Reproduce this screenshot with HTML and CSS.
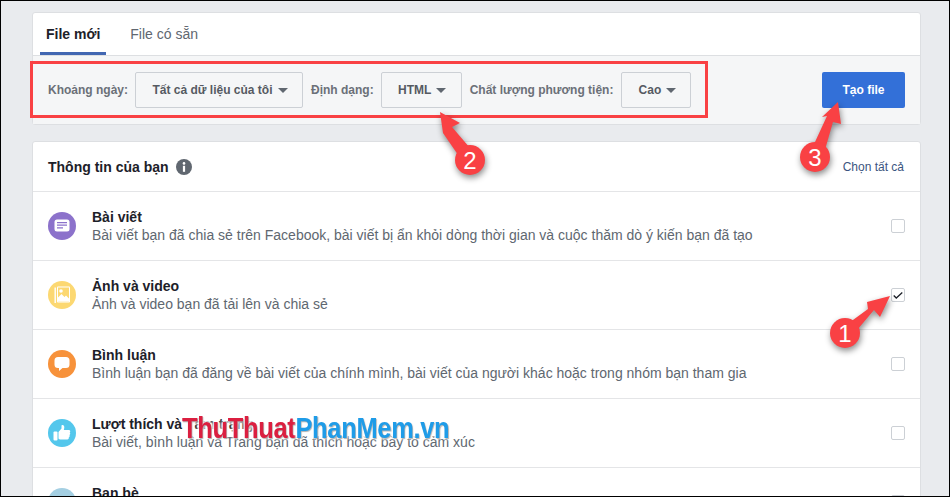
FILE: index.html
```html
<!DOCTYPE html>
<html lang="vi">

<head>
    <meta charset="UTF-8">
    <title>Tải xuống thông tin của bạn</title>
    <link rel="stylesheet" href="styles.css">
</head>

<body>
    <div class="frame">
        <div class="card top">
            <div class="tabs">
                <a class="tab active">File mới</a>
                <a class="tab">File có sẵn</a>
            </div>
            <div class="toolbar">
                <span class="lbl">Khoảng ngày:</span>
                <button class="sel w-range">Tất cả dữ liệu của tôi<i class="caret"></i></button>
                <span class="lbl">Định dạng:</span>
                <button class="sel w-format">HTML<i class="caret"></i></button>
                <span class="lbl">Chất lượng phương tiện:</span>
                <button class="sel w-quality">Cao<i class="caret"></i></button>
                <button class="create">Tạo file</button>
            </div>
        </div>

        <div class="card list">
            <div class="head">
                <h2>Thông tin của bạn</h2>
                <svg class="info" viewBox="0 0 16 16">
                    <circle cx="8" cy="8" r="8" fill="#606770" />
                    <circle cx="8" cy="4.4" r="1.3" fill="#fff" />
                    <rect x="6.9" y="6.8" width="2.2" height="6" fill="#fff" />
                </svg>
                <a class="all">Chọn tất cả</a>
            </div>

            <div class="row">
                <svg class="ico" viewBox="0 0 28 28">
                    <circle cx="14" cy="14" r="14" fill="#8c72cb" />
                    <rect x="6.5" y="7.5" width="15" height="12" rx="2.5" fill="#fff" />
                    <path d="M9 10.6h10M9 13.2h10M9 15.8h6" stroke="#8c72cb" stroke-width="1.2" />
                </svg>
                <div class="txt">
                    <b>Bài viết</b>
                    <p>Bài viết bạn đã chia sẻ trên Facebook, bài viết bị ẩn khỏi dòng thời gian và cuộc thăm dò ý kiến bạn đã tạo</p>
                </div>
                <span class="check"></span>
            </div>

            <div class="row">
                <svg class="ico" viewBox="0 0 28 28">
                    <circle cx="14" cy="14" r="14" fill="#fcd872" />
                    <rect x="6.5" y="6.5" width="1.4" height="15.5" fill="#fff" />
                    <rect x="9" y="5.500" width="13" height="16" rx="1" fill="#fff" />
                    <rect x="10" y="6.500" width="11" height="14" fill="#fcd872" />
                    <circle cx="13" cy="10" r="1.800" fill="#fff" />
                    <path d="M10 20.500v-4l3.500-3.500 3 3 1.500-1.500 3 3v3z" fill="#fff" />
                </svg>
                <div class="txt">
                    <b>Ảnh và video</b>
                    <p>Ảnh và video bạn đã tải lên và chia sẻ</p>
                </div>
                <span class="check">
                    <svg viewBox="0 0 14 14">
                        <path d="M2 7.500l3 3 7-6.500" fill="none" stroke="#1d2129" stroke-width="1.500" />
                    </svg>
                </span>
            </div>

            <div class="row">
                <svg class="ico" viewBox="0 0 28 28">
                    <circle cx="14" cy="14" r="14" fill="#f7923b" />
                    <path d="M10 7h8a3.500 3.500 0 0 1 3.500 3.500v4a3.500 3.500 0 0 1-3.500 3.500h-3.500l-3.500 3v-3h-1a3.500 3.500 0 0 1-3.500-3.500v-4a3.500 3.500 0 0 1 3.500-3.500z" fill="#fff" />
                </svg>
                <div class="txt">
                    <b>Bình luận</b>
                    <p>Bình luận bạn đã đăng về bài viết của chính mình, bài viết của người khác hoặc trong nhóm bạn tham gia</p>
                </div>
                <span class="check"></span>
            </div>

            <div class="row">
                <svg class="ico" viewBox="0 0 28 28">
                    <circle cx="14" cy="14" r="14" fill="#54c7ec" />
                    <rect x="5.500" y="12.500" width="4" height="9" rx="1" fill="#fff" />
                    <path d="M10.500 13l3-3.500V6.500c0-1 2.800-.8 2.800 1.500 0 1.500-.5 3-.5 3h5c1.800 0 1.800 2 .8 2.500 1 .7.700 2-.2 2.500.6.700.3 2-.6 2.300.3 1-.3 2-1.500 2.200h-6c-1.500 0-2.800-.5-2.800-1z" fill="#fff" />
                </svg>
                <div class="txt">
                    <b>Lượt thích và Tâm trạng</b>
                    <p>Bài viết, bình luận và Trang bạn đã thích hoặc bày tỏ cảm xúc</p>
                </div>
                <span class="check"></span>
            </div>

            <div class="row">
                <svg class="ico" viewBox="0 0 28 28">
                    <circle cx="14" cy="14" r="14" fill="#a4cfe2" />
                </svg>
                <div class="txt">
                    <b>Bạn bè</b>
                </div>
                <span class="check"></span>
            </div>
        </div>

        <!-- chú thích vẽ đè lên ảnh -->
        <svg class="notes" viewBox="0 0 950 497">
            <rect x="31.500" y="62.500" width="675" height="54" fill="none" stroke="#f94144" stroke-width="3" />
            <g fill="#f94144" class="shadow">
                <polygon points="440,112 460,123 452,127 476,155 465,165 443,133" />
                <circle cx="470" cy="160" r="15" />
                <polygon points="838,102 841,124 833,122 822,160 809,155 827,116 822,117" />
                <circle cx="815" cy="157" r="15" />
                <polygon points="890,296 880,317 874,310 852,336 842,328 868,309 867,302" />
                <circle cx="845" cy="333" r="15" />
            </g>
            <text class="num" x="470" y="169">2</text>
            <text class="num" x="815" y="166">3</text>
            <text class="num" x="845" y="342">1</text>
        </svg>

        <div class="mark"><span class="red">ThuThuat</span><span class="blue">PhanMem.vn</span></div>
    </div>
</body>

</html>
```

FILE: styles.css
```css
* {
    margin: 0;
    padding: 0;
    box-sizing: border-box;
}

body {
    font-family: "Liberation Sans", Arial, sans-serif;
    background: #e9ebee;
}

.frame {
    position: relative;
    width: 950px;
    height: 497px;
    padding: 11px 28px 0 31px;
    border: 1px solid #000;
    overflow: hidden;
}

.card {
    background: #fff;
    border: 1px solid #dddfe2;
    border-radius: 3px;
}

.top {
    height: 113px;
    margin-bottom: 16px;
}

/* tabs */
.tabs {
    display: flex;
    height: 42px;
    padding-left: 7px;
    gap: 14px;
}

.tab {
    padding: 0 6px;
    margin-right: 4px;
    font-size: 14px;
    line-height: 42px;
    color: #606770;
}

.tab.active {
    font-weight: bold;
    color: #1d2129;
    border-bottom: 3px solid #4267b2;
}

/* thanh chon */
.toolbar {
    display: flex;
    align-items: center;
    height: 69px;
    padding: 0 15px;
    background: #f5f6f7;
    border-top: 1px solid #dddfe2;
}

.lbl {
    font-size: 12px;
    font-weight: bold;
    color: #6b7078;
}

.sel {
    height: 36px;
    margin: 0 8px 0 7px;
    padding-left: 2px;
    font: bold 12px "Liberation Sans", Arial, sans-serif;
    color: #555a62;
    background: #f5f6f7;
    border: 1px solid #ccd0d5;
    border-radius: 2px;
}

.w-range {
    width: 168px;
}

.w-format {
    width: 81px;
}

.w-quality {
    width: 70px;
    margin-left: 8px;
}

.caret {
    display: inline-block;
    margin-left: 5px;
    vertical-align: 1px;
    border-style: solid;
    border-width: 5px 5px 0;
    border-color: #606770 transparent transparent;
}

.create {
    width: 83px;
    height: 36px;
    margin-left: auto;
    font: bold 12px "Liberation Sans", Arial, sans-serif;
    color: #fff;
    background: #3370d8;
    border: none;
    border-radius: 2px;
}

/* danh sach */
.head {
    display: flex;
    align-items: center;
    height: 49px;
    padding: 0 16px 0 15px;
}

.head h2 {
    font-size: 14px;
    color: #1d2129;
}

.info {
    width: 16px;
    height: 16px;
    margin-left: 7px;
}

.all {
    margin-left: auto;
    font-size: 12px;
    color: #3b5580;
}

.row {
    display: flex;
    align-items: center;
    height: 69px;
    padding: 0 15px;
    border-top: 1px solid #e4e5e7;
}

.ico {
    flex: none;
    width: 28px;
    height: 28px;
    margin-right: 16px;
}

.txt {
    flex: 1;
    min-height: 35px;
}

.txt b {
    display: block;
    font-size: 14px;
    line-height: 17px;
    color: #1d2129;
}

.txt p {
    font-size: 14px;
    line-height: 18px;
    color: #606770;
}

.check {
    flex: none;
    width: 14px;
    height: 14px;
    background: #fff;
    border: 1px solid #ccd0d5;
    border-radius: 2px;
}

.check svg {
    display: block;
    width: 12px;
    height: 12px;
}

/* chu thich */
.notes {
    position: absolute;
    top: -1px;
    left: -1px;
    width: 950px;
    height: 497px;
}

.shadow {
    filter: drop-shadow(1px 3px 3px rgba(0, 0, 0, .45));
}

.num {
    font: 24px "Liberation Sans", Arial, sans-serif;
    fill: #fff;
    text-anchor: middle;
}

.mark {
    position: absolute;
    top: 410px;
    left: 181px;
    font-size: 30px;
    font-weight: bold;
    letter-spacing: -.4px;
    white-space: nowrap;
    transform: scaleX(.85);
    transform-origin: left center;
    text-shadow: 1px 1px 1px rgba(0, 0, 0, .3), 0 0 3px #fff, 0 0 3px #fff, 0 0 4px #fff, 0 0 5px #fff;
}

.red {
    color: #db1f40;
}

.blue {
    color: #1f9ce8;
}
```
